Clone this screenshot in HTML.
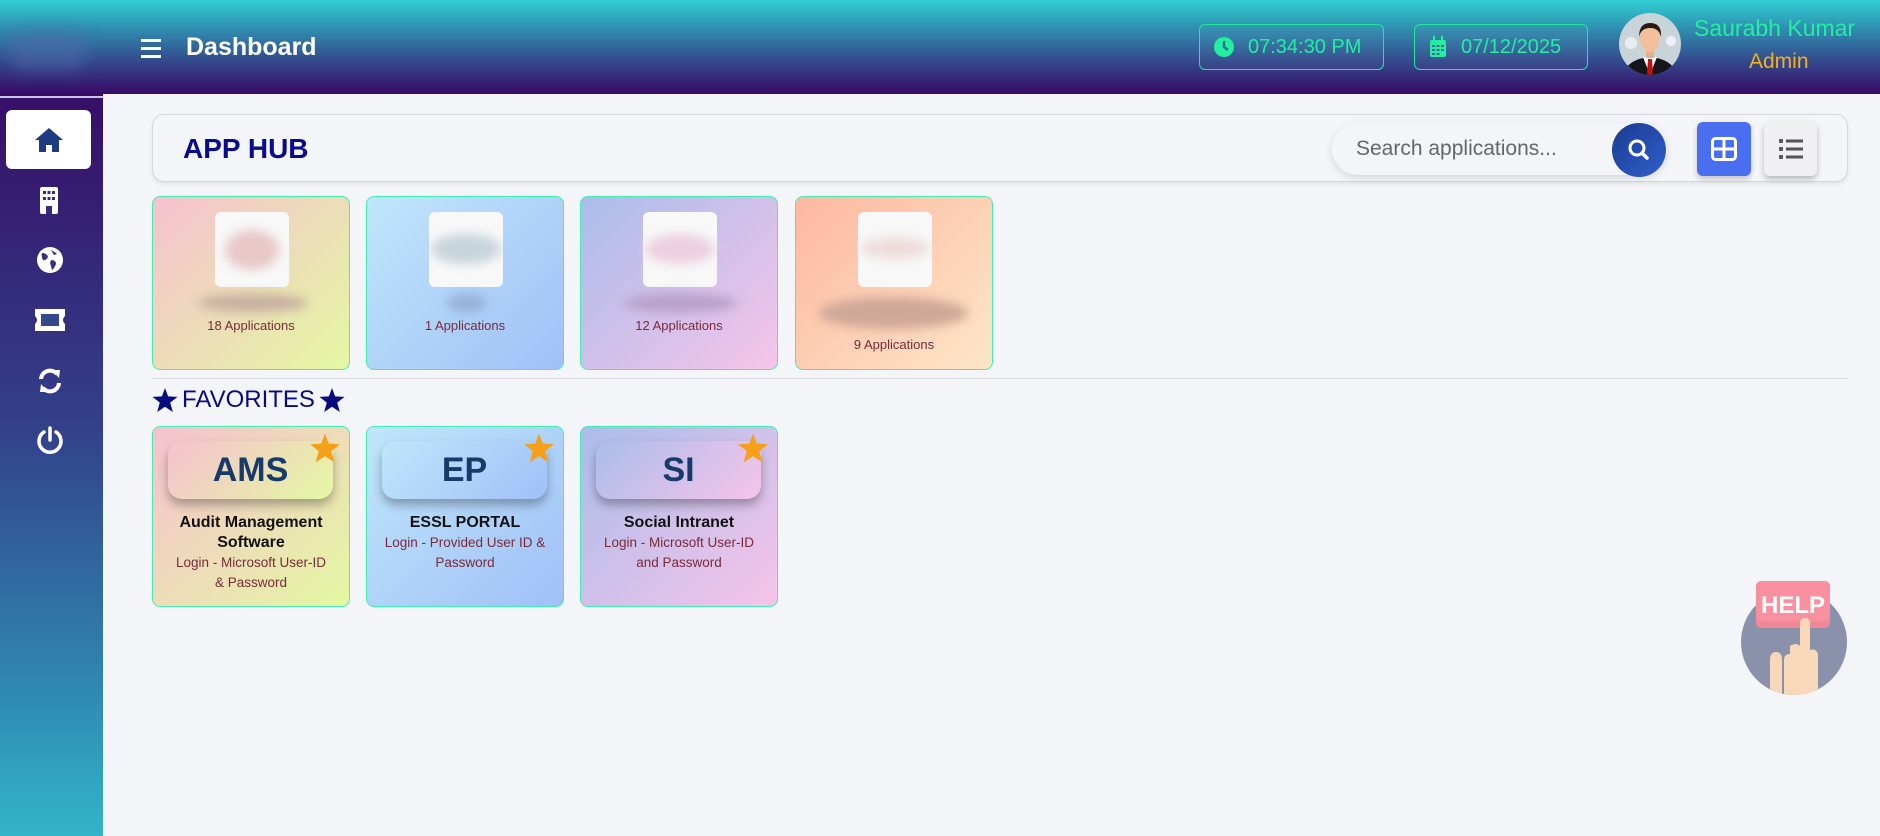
<!DOCTYPE html>
<html><head><meta charset="utf-8"><style>
*{box-sizing:border-box;margin:0;padding:0}
body{width:1880px;height:836px;overflow:hidden;background:#f4f5f9;font-family:"Liberation Sans",sans-serif;position:relative}
.hdr{position:absolute;left:0;top:0;width:1880px;height:94px;background:linear-gradient(180deg,#30cfd3 0%,#2f8fb0 30%,#334a8c 65%,#380a66 100%)}
.side{position:absolute;left:0;top:94px;width:103px;height:742px;background:linear-gradient(180deg,#360e68 0%,#33418a 45%,#2f88b0 80%,#33b4c8 100%)}
.sline{position:absolute;left:0;top:96px;width:103px;height:2px;background:#c9c4e6}
.home{position:absolute;left:6px;top:110px;width:85px;height:59px;background:#fff;border-radius:6px}
.ic{position:absolute;left:36px}
.abs{position:absolute}
.box{position:absolute;border:1.5px solid #20e89a;border-radius:6px;color:#22f0a0;font-size:20px;display:flex;align-items:center;background:rgba(255,255,255,0.03)}
.panel{position:absolute;left:152px;top:114px;width:1696px;height:68px;border:1.5px solid #d6d6dc;border-radius:12px;background:#f4f5f9;box-shadow:0 2px 4px rgba(0,0,0,.08)}
.card{position:absolute;width:198px;border:1.5px solid #3ff0b0;border-radius:8px}
.c1{background:linear-gradient(135deg,#f6c1cf,#e4f8a2)}
.c2{background:linear-gradient(135deg,#c0e6fa,#a0c0f8)}
.c3{background:linear-gradient(135deg,#aabdea,#f6c4ea)}
.c4{background:linear-gradient(135deg,#fdb8a0,#fde6c8)}
.wb{position:absolute;left:62px;top:15px;width:74px;height:75px;background:#f8f8f8;border-radius:6px}
.blob{position:absolute;filter:blur(5px);border-radius:50%}
.cnt{position:absolute;width:100%;text-align:center;font-size:13px;color:#7a2a3a}
.badge{position:absolute;left:15px;top:14px;width:165px;height:58px;border-radius:14px;box-shadow:0 6px 10px rgba(0,0,0,.3);font-size:34px;font-weight:bold;color:#163a6a;text-align:center;line-height:58px}
.star{position:absolute;left:157px;top:6px}
.t{position:absolute;width:100%;text-align:center;font-size:16px;font-weight:bold;color:#111;line-height:20px;top:86px}
.s{position:absolute;width:100%;text-align:center;font-size:13.5px;color:#7a2a3a;line-height:20px}
</style></head><body>
<div class="hdr"></div>
<div class="abs" style="left:8px;top:30px;width:80px;height:40px;background:rgba(80,110,170,.5);filter:blur(8px);border-radius:20px"></div>
<div class="side"></div>
<div class="sline"></div>
<div class="abs" style="left:141px;top:39px;width:20px;height:3px;background:#fff"></div>
<div class="abs" style="left:141px;top:47px;width:20px;height:3px;background:#fff"></div>
<div class="abs" style="left:141px;top:55px;width:20px;height:3px;background:#fff"></div>
<div class="abs" style="left:186px;top:33px;color:#fff;font-size:25px;font-weight:bold">Dashboard</div>
<div class="box" style="left:1199px;top:24px;width:185px;height:46px"><svg style="margin:0 14px 0 14px" width="20" height="20" viewBox="0 0 20 20"><circle cx="10" cy="10" r="10" fill="#22f0a0"/><path d="M10 4v6l4 3" stroke="#2f6d96" stroke-width="2.4" fill="none"/></svg>07:34:30 PM</div>
<div class="box" style="left:1414px;top:24px;width:174px;height:46px"><svg style="margin:0 14px 0 14px" width="18" height="22" viewBox="0 0 18 22"><rect x="1" y="4" width="16" height="17" rx="2" fill="#22f0a0"/><rect x="4" y="0" width="2" height="5" fill="#22f0a0"/><rect x="12" y="0" width="2" height="5" fill="#22f0a0"/><g fill="#2f6d96"><rect x="3" y="9" width="3" height="2"/><rect x="7.5" y="9" width="3" height="2"/><rect x="12" y="9" width="3" height="2"/><rect x="3" y="13" width="3" height="2"/><rect x="7.5" y="13" width="3" height="2"/><rect x="12" y="13" width="3" height="2"/><rect x="3" y="17" width="3" height="2"/><rect x="7.5" y="17" width="3" height="2"/></g></svg>07/12/2025</div>
<svg class="abs" style="left:1619px;top:13px" width="62" height="62" viewBox="0 0 62 62"><defs><clipPath id="cp"><circle cx="31" cy="31" r="31"/></clipPath></defs><g clip-path="url(#cp)"><rect width="62" height="62" fill="#c8d4d8"/><circle cx="12" cy="30" r="6" fill="#e8eef0"/><circle cx="52" cy="28" r="5" fill="#eef"/><path d="M4 62 Q8 46 31 44 Q54 46 58 62Z" fill="#15151c"/><path d="M24 44 L31 62 L38 44Z" fill="#fff"/><path d="M29 46 L33 46 L34 60 L31 63 L28 60Z" fill="#c01010"/><rect x="27" y="36" width="8" height="9" fill="#e8b088"/><ellipse cx="31" cy="26" rx="10" ry="13" fill="#f2c09a"/><path d="M20 24 Q20 10 31 10 Q43 10 42 24 Q40 15 31 15 Q22 15 20 24Z" fill="#2a1a14"/></g></svg>
<div class="abs" style="left:1694px;top:15px;color:#22f0a0;font-size:23px">Saurabh Kumar</div>
<div class="abs" style="left:1749px;top:50px;color:#f4b020;font-size:21px">Admin</div>
<div class="home"></div>
<svg class="ic" style="left:34px;top:127px" width="30" height="26" viewBox="0 0 30 26"><path d="M15 1 L29 13 L25 13 L25 25 L18 25 L18 18 L12 18 L12 25 L5 25 L5 13 L1 13Z" fill="#1e3a80"/></svg>
<svg class="ic" style="left:39px;top:187px" width="20" height="27" viewBox="0 0 20 27"><rect x="1" y="0" width="18" height="27" rx="2" fill="#fff"/><g fill="#3a2b78"><rect x="4" y="4" width="3" height="3"/><rect x="8.5" y="4" width="3" height="3"/><rect x="13" y="4" width="3" height="3"/><rect x="4" y="10" width="3" height="3"/><rect x="8.5" y="10" width="3" height="3"/><rect x="13" y="10" width="3" height="3"/><rect x="7" y="19" width="6" height="8"/></g></svg>
<svg class="ic" style="left:37px;top:247px" width="26" height="26" viewBox="0 0 26 26"><circle cx="13" cy="13" r="13" fill="#fff"/><path d="M5 6 Q10 6 11 10 Q9 14 6 13 Q4 10 5 6Z M14 13 Q19 13 19 17 Q17 22 15 23 Q14 19 13 16Z M14 3 Q18 5 20 7 L17 8Z" fill="#35357a"/></svg>
<svg class="ic" style="left:33px;top:307px" width="34" height="26" viewBox="0 0 34 26"><path d="M2 2 H32 V9 Q28 13 32 17 V24 H2 V17 Q6 13 2 9Z" fill="#fff"/><rect x="8" y="7" width="18" height="12" fill="#33498a"/></svg>
<svg class="ic" style="left:37px;top:367px" width="26" height="28" viewBox="0 0 26 28"><path d="M4 12 A9 9 0 0 1 20 7" stroke="#fff" stroke-width="4" fill="none"/><path d="M15 3 L23 3 L22 11Z" fill="#fff"/><path d="M22 16 A9 9 0 0 1 6 21" stroke="#fff" stroke-width="4" fill="none"/><path d="M11 25 L3 25 L4 17Z" fill="#fff"/></svg>
<svg class="ic" style="left:36px;top:426px" width="28" height="28" viewBox="0 0 28 28"><path d="M8 6 A11 11 0 1 0 20 6" stroke="#fff" stroke-width="3.5" fill="none" stroke-linecap="round"/><path d="M14 2 V14" stroke="#fff" stroke-width="3.5" stroke-linecap="round"/></svg>
<div class="panel"></div>
<div class="abs" style="left:183px;top:133px;color:#0a0a8c;font-size:28px;font-weight:bold">APP HUB</div>
<div class="abs" style="left:1332px;top:123px;width:335px;height:52px;border-radius:26px;background:#f4f5f9;box-shadow:0 3px 8px rgba(0,0,0,.12)"></div>
<div class="abs" style="left:1356px;top:137px;color:#666;font-size:21px">Search applications...</div>
<svg class="abs" style="left:1612px;top:123px" width="54" height="54" viewBox="0 0 54 54"><defs><linearGradient id="sg" x1="0" y1="0" x2="1" y2="1"><stop offset="0" stop-color="#1a3a90"/><stop offset="1" stop-color="#3060cc"/></linearGradient></defs><circle cx="27" cy="27" r="27" fill="url(#sg)"/><circle cx="25" cy="25" r="7" stroke="#fff" stroke-width="3" fill="none"/><path d="M30 30 L35 35" stroke="#fff" stroke-width="3.5" stroke-linecap="round"/></svg>
<div class="abs" style="left:1697px;top:122px;width:54px;height:54px;border-radius:6px;background:#4a6ef0;box-shadow:0 3px 6px rgba(0,0,0,.2)"></div>
<svg class="abs" style="left:1711px;top:137px" width="26" height="24" viewBox="0 0 26 24"><rect x="1.5" y="1.5" width="23" height="21" rx="3" fill="none" stroke="#fff" stroke-width="3"/><path d="M13 1 V23 M1 12 H25" stroke="#fff" stroke-width="3"/></svg>
<div class="abs" style="left:1764px;top:122px;width:53px;height:54px;border-radius:6px;background:#f0f0f2;box-shadow:0 3px 6px rgba(0,0,0,.25)"></div>
<svg class="abs" style="left:1779px;top:138px" width="24" height="22" viewBox="0 0 24 22"><g fill="#555"><rect x="0" y="1" width="4" height="4" rx="1"/><rect x="0" y="9" width="4" height="4" rx="1"/><rect x="0" y="17" width="4" height="4" rx="1"/><rect x="7" y="1.5" width="17" height="3"/><rect x="7" y="9.5" width="17" height="3"/><rect x="7" y="17.5" width="17" height="3"/></g></svg>
<div class="card c1" style="left:152px;top:196px;height:174px"><div class="wb"><div class="blob" style="left:10px;top:18px;width:54px;height:40px;background:#e8c8c8"></div></div><div class="blob" style="left:45px;top:97px;width:110px;height:18px;background:#c8b0a0"></div><div class="cnt" style="top:121px">18 Applications</div></div>
<div class="card c2" style="left:366px;top:196px;height:174px"><div class="wb"><div class="blob" style="left:2px;top:22px;width:70px;height:30px;background:#c8d4dc"></div></div><div class="blob" style="left:80px;top:97px;width:40px;height:18px;background:#98b0d8"></div><div class="cnt" style="top:121px">1 Applications</div></div>
<div class="card c3" style="left:580px;top:196px;height:174px"><div class="wb"><div class="blob" style="left:2px;top:22px;width:70px;height:30px;background:#ecd0e0"></div></div><div class="blob" style="left:42px;top:97px;width:115px;height:18px;background:#b8a0c8"></div><div class="cnt" style="top:121px">12 Applications</div></div>
<div class="card c4" style="left:795px;top:196px;height:174px"><div class="wb"><div class="blob" style="left:2px;top:25px;width:70px;height:22px;background:#eedcdc"></div></div><div class="blob" style="left:22px;top:100px;width:150px;height:32px;background:#d0a898"></div><div class="cnt" style="top:140px">9 Applications</div></div>
<div class="abs" style="left:152px;top:378px;width:1696px;height:1px;background:#dcdde2"></div>
<div class="abs" style="left:152px;top:386px;color:#0a0a80;font-size:24px;display:flex;align-items:center;gap:4px">
<svg width="26" height="24" viewBox="0 0 24 23"><path d="M12 0 L15 8 L24 8.5 L17 14 L19.5 23 L12 18 L4.5 23 L7 14 L0 8.5 L9 8Z" fill="#0a0a80"/></svg>FAVORITES<svg width="26" height="24" viewBox="0 0 24 23"><path d="M12 0 L15 8 L24 8.5 L17 14 L19.5 23 L12 18 L4.5 23 L7 14 L0 8.5 L9 8Z" fill="#0a0a80"/></svg></div>
<div class="card c1" style="left:152px;top:426px;height:181px"><div class="badge c1">AMS</div><svg class="star" width="30" height="30" viewBox="0 0 24 23"><path d="M12 0 L15 8 L24 8.5 L17 14 L19.5 23 L12 18 L4.5 23 L7 14 L0 8.5 L9 8Z" fill="#f4a018"/></svg><div class="t">Audit Management<br>Software</div><div class="s" style="top:126px">Login - Microsoft User-ID<br>&amp; Password</div></div>
<div class="card c2" style="left:366px;top:426px;height:181px"><div class="badge c2">EP</div><svg class="star" width="30" height="30" viewBox="0 0 24 23"><path d="M12 0 L15 8 L24 8.5 L17 14 L19.5 23 L12 18 L4.5 23 L7 14 L0 8.5 L9 8Z" fill="#f4a018"/></svg><div class="t">ESSL PORTAL</div><div class="s" style="top:106px">Login - Provided User ID &amp;<br>Password</div></div>
<div class="card c3" style="left:580px;top:426px;height:181px"><div class="badge c3">SI</div><svg class="star" width="30" height="30" viewBox="0 0 24 23"><path d="M12 0 L15 8 L24 8.5 L17 14 L19.5 23 L12 18 L4.5 23 L7 14 L0 8.5 L9 8Z" fill="#f4a018"/></svg><div class="t">Social Intranet</div><div class="s" style="top:106px">Login - Microsoft User-ID<br>and Password</div></div>
<svg class="abs" style="left:1738px;top:576px" width="112" height="122" viewBox="0 0 112 122"><defs><clipPath id="hc"><circle cx="56" cy="66" r="53"/></clipPath></defs><circle cx="56" cy="66" r="53" fill="#8a91aa"/><rect x="18" y="5" width="74" height="47" rx="5" fill="#f08898"/><rect x="18" y="5" width="74" height="40" rx="5" fill="#f890a0"/><text x="55" y="37" text-anchor="middle" font-family="Liberation Sans" font-weight="bold" font-size="24" fill="#fff">HELP</text><g clip-path="url(#hc)"><path d="M46 122 L46 84 Q46 78 52 78 L52 70 Q58 66 62 70 L62 48 Q62 42 67 42 Q72 42 72 48 L72 74 Q78 72 80 78 L80 122Z" fill="#f8d8b8"/><path d="M32 122 L32 84 Q32 76 38 76 Q44 76 44 84 L44 122Z" fill="#f8d8b8"/></g></svg>
</body></html>
